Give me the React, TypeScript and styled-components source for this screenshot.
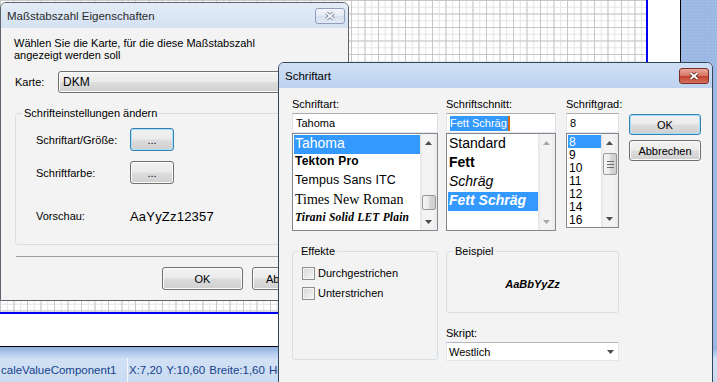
import React from "react";
import styled, { createGlobalStyle, css } from "styled-components";

const ui = `"Liberation Sans", Arial, sans-serif`;

const GlobalStyle = createGlobalStyle`
  * { box-sizing: border-box; }
  html, body { margin: 0; padding: 0; }
  body {
    width: 717px;
    height: 382px;
    overflow: hidden;
    font-family: ${ui};
    font-size: 11px;
    color: #000;
  }
`;

/* ---------- background application ---------- */

const Desktop = styled.div`
  position: relative;
  width: 717px;
  height: 382px;
  display: flex;
  flex-direction: column;
  overflow: hidden;
`;

const Workspace = styled.div`
  height: 347px;
  display: flex;
  flex: none;
`;

const CanvasView = styled.div`
  width: 681px;
  height: 347px;
  background: #fff;
  border-right: 1px solid #000;
  border-bottom: 1px solid #000;
`;

const Sheet = styled.div`
  width: 648px;
  height: 314px;
  border-right: 2px solid #0000f0;
  border-bottom: 2px solid #0000f0;
  background-color: #fff;
  background-image: linear-gradient(to right, #c6c6c6 1px, transparent 1px),
    linear-gradient(to bottom, #c6c6c6 1px, transparent 1px),
    linear-gradient(to right, #e4e4e4 1px, transparent 1px),
    linear-gradient(to bottom, #e4e4e4 1px, transparent 1px);
  background-size: 13.5px 13.5px, 13.5px 13.5px, 6.75px 6.75px, 6.75px 6.75px;
`;

const SidePanel = styled.div`
  flex: 1;
  background-color: #9bb8e3;
  background-image: radial-gradient(#a9c3ea 0.6px, transparent 0.8px);
  background-size: 3px 3px;
`;

const StatusBar = styled.footer`
  flex: 1;
  display: flex;
  flex-direction: column;
`;

const StatusShade = styled.div`
  height: 11px;
  background: linear-gradient(#8eafdd, #b5cced 60%, #c8daf2);
`;

const StatusRow = styled.div`
  flex: 1;
  display: flex;
  align-items: center;
  background: linear-gradient(#d2e1f5, #c9dbf2);
  color: #15428b;
  font-size: 11.5px;
  white-space: nowrap;
`;

const StatusCell = styled.div<{ $w?: number }>`
  display: flex;
  gap: 4px;
  height: 100%;
  align-items: center;
  padding: 0 4px 0 1px;
  ${(p) =>
    p.$w &&
    css`
      width: ${p.$w}px;
      border-right: 1px solid #f4f8fd;
    `}
`;

/* ---------- window chrome ---------- */

const Window = styled.section<{ $x: number; $y: number; $w: number; $h: number; $active?: boolean }>`
  position: absolute;
  left: ${(p) => p.$x}px;
  top: ${(p) => p.$y}px;
  width: ${(p) => p.$w}px;
  height: ${(p) => p.$h}px;
  display: flex;
  flex-direction: column;
  border: 1px solid ${(p) => (p.$active ? "#34455e" : "#5c636d")};
  border-radius: 6px 6px 0 0;
  background: #f3f3f3;
  overflow: hidden;
`;

const TitleBar = styled.header<{ $active?: boolean }>`
  height: 25px;
  flex: none;
  display: flex;
  align-items: center;
  justify-content: space-between;
  padding: 0 3px 0 6px;
  background: ${(p) =>
    p.$active ? "linear-gradient(#cfe0f5, #bed3ef)" : "linear-gradient(#e2ebf6, #d5e2f2)"};
`;

const TitleText = styled.h1<{ $active?: boolean }>`
  margin: 0;
  font-size: 11.5px;
  font-weight: normal;
  color: ${(p) => (p.$active ? "#000" : "#2b2b2b")};
`;

const CloseButton = styled.div<{ $active?: boolean }>`
  width: 30px;
  height: 16px;
  display: flex;
  align-items: center;
  justify-content: center;
  border: 1px solid ${(p) => (p.$active ? "#7b2e25" : "#8d9fbb")};
  border-radius: 3px;
  background: ${(p) =>
    p.$active
      ? "linear-gradient(#eba99c, #d87563 48%, #c4412e 52%, #d4725f)"
      : "linear-gradient(#f3f6fb, #e3eaf4 48%, #d6e0ee 52%, #e2e9f4)"};
`;

const CloseGlyph = ({ active }: { active?: boolean }) => (
  <svg width="12" height="10" viewBox="0 0 12 10">
    <path d="M2.5 2 L9.5 8 M9.5 2 L2.5 8" stroke={active ? "#5a2019" : "#6f7b8e"} strokeWidth="3.6" />
    <path d="M2.5 2 L9.5 8 M9.5 2 L2.5 8" stroke={active ? "#fff" : "#f4f6f9"} strokeWidth="1.8" />
  </svg>
);

const Client = styled.div<{ $pad: string }>`
  flex: 1;
  display: flex;
  flex-direction: column;
  padding: ${(p) => p.$pad};
`;

/* ---------- controls ---------- */

const PushButton = styled.button<{ $w: number; $h: number; $focused?: boolean }>`
  width: ${(p) => p.$w}px;
  height: ${(p) => p.$h}px;
  flex: none;
  padding: 0;
  font: 11px ${ui};
  color: #000;
  border: 1px solid ${(p) => (p.$focused ? "#3c7fb1" : "#707070")};
  border-radius: 3px;
  background: linear-gradient(#f2f2f2, #ebebeb 48%, #dddddd 52%, #cfcfcf);
  box-shadow: inset 0 0 0 1px ${(p) => (p.$focused ? "#9fe2fb" : "#fbfbfb")};
`;

const GroupBox = styled.fieldset<{ $h: number; $w?: number }>`
  margin: 0;
  padding: 0;
  min-width: 0;
  height: ${(p) => p.$h}px;
  ${(p) => p.$w && `width: ${p.$w}px; flex: none;`}
  border: 1px solid #d5dfe5;
  border-radius: 3px;
`;

const Legend = styled.legend`
  margin-left: 6px;
  padding: 0 2px;
  line-height: 13px;
  font-size: 11px;
`;

const Checkbox = styled.span`
  width: 13px;
  height: 13px;
  flex: none;
  border: 1px solid #8e8f8f;
  background: linear-gradient(135deg, #d6d6d6, #f6f6f6);
  box-shadow: inset 0 0 0 1px #f4f4f4;
`;

const CheckRow = styled.label`
  display: flex;
  align-items: center;
  gap: 3px;
  height: 16px;
`;

/* ---------- dialog 1 ---------- */

const Intro = styled.p`
  margin: 0;
  line-height: 12px;
`;

const MapRow = styled.div`
  display: flex;
  align-items: center;
  margin-top: 10px;
`;

const MapLabel = styled.span`
  width: 44px;
  padding-left: 1px;
`;

const DropButton = styled.div`
  flex: 1;
  height: 22px;
  display: flex;
  align-items: center;
  padding-left: 4px;
  font-size: 12px;
  border: 1px solid #707070;
  border-radius: 3px;
  background: linear-gradient(#f2f2f2, #ebebeb 48%, #dddddd 52%, #cfcfcf);
  box-shadow: inset 0 0 0 1px #fbfbfb;
`;

const SettingsGroup = styled(GroupBox)`
  margin: 14px 0 0 1px;
`;

const SettingsBody = styled.div`
  display: flex;
  flex-direction: column;
  gap: 10px;
  padding: 8px 0 0 20px;
`;

const SettingRow = styled.div<{ $gapTop?: number }>`
  display: flex;
  align-items: center;
  min-height: 16px;
  ${(p) => p.$gapTop && `margin-top: ${p.$gapTop}px;`}
`;

const SettingLabel = styled.span`
  width: 94px;
`;

const PreviewText = styled.span`
  font-size: 13px;
  letter-spacing: 0.2px;
`;

const Separator = styled.hr`
  margin: 11px 0 0 2px;
  border: 0;
  height: 1px;
  background: #a0a0a0;
`;

const ButtonBar = styled.div`
  display: flex;
  justify-content: flex-end;
  gap: 9px;
  margin: 10px 2px 0 0;
`;

/* ---------- dialog 2 ---------- */

const TopSection = styled.div`
  display: flex;
`;

const Column = styled.div<{ $w: number; $ml?: number }>`
  width: ${(p) => p.$w}px;
  margin-left: ${(p) => p.$ml ?? 0}px;
  flex: none;
  display: flex;
  flex-direction: column;
`;

const FieldLabel = styled.div`
  line-height: 13px;
  margin-bottom: 2px;
`;

const EditBox = styled.div`
  height: 20px;
  display: flex;
  align-items: center;
  padding-left: 3px;
  background: #fff;
  border: 1px solid #e3e9ef;
  border-top-color: #abadb3;
  border-left-color: #e2e3ea;
  border-right-color: #dbdfe6;
  white-space: nowrap;
`;

const Selection = styled.span`
  background: #3399ff;
  color: #fff;
  line-height: 15px;
  padding-right: 1px;
`;

const Caret = styled.span`
  width: 2px;
  height: 15px;
  background: #cc6a1a;
`;

const ListBox = styled.div<{ $h: number }>`
  height: ${(p) => p.$h}px;
  display: flex;
  background: #fff;
  border: 1px solid #828790;
`;

const ListItems = styled.div`
  flex: 1;
  min-width: 0;
  padding: 1px 0 0 1px;
  overflow: hidden;
`;

type Face = "plain" | "tekton" | "tempus" | "times" | "tirani" | "bold" | "italic" | "boldItalic" | "size";

const faces: Record<Face, ReturnType<typeof css>> = {
  plain: css`font: 14px ${ui};`,
  tekton: css`font: bold 12px ${ui}; letter-spacing: 0.2px;`,
  tempus: css`font: 12.5px ${ui}; letter-spacing: 0.1px;`,
  times: css`font: 14px "Liberation Serif", "Times New Roman", serif;`,
  tirani: css`font: italic bold 11.5px "Liberation Serif", serif; letter-spacing: 0.2px;`,
  bold: css`font: bold 14px ${ui};`,
  italic: css`font: italic 14px ${ui};`,
  boldItalic: css`font: italic bold 14px ${ui};`,
  size: css`font: 12px ${ui};`,
};

const ListItem = styled.div<{ $h: number; $face: Face; $selected?: boolean }>`
  height: ${(p) => p.$h}px;
  line-height: ${(p) => p.$h}px;
  padding-left: 1px;
  white-space: nowrap;
  ${(p) => faces[p.$face]}
  ${(p) =>
    p.$selected &&
    css`
      background: #3399ff;
      color: #fff;
    `}
`;

const ScrollBar = styled.div`
  width: 17px;
  flex: none;
  display: flex;
  flex-direction: column;
  background: linear-gradient(to right, #e4e4e4, #f3f3f3 3px, #f3f3f3 13px, #eaeaea);
`;

const ArrowButton = styled.div`
  height: 17px;
  flex: none;
  display: flex;
  align-items: center;
  justify-content: center;
`;

const Track = styled.div<{ $thumbTop: number }>`
  flex: 1;
  padding-top: ${(p) => p.$thumbTop}px;
`;

const Thumb = styled.div<{ $h: number }>`
  height: ${(p) => p.$h}px;
  margin: 0 1px 0 2px;
  display: flex;
  align-items: center;
  justify-content: center;
  border: 1px solid #979797;
  border-radius: 2px;
  background: linear-gradient(to right, #f6f6f6, #e9e9e9 50%, #d9d9d9 51%, #cdcdcd);
`;

const Arrow = ({ up, dim }: { up?: boolean; dim?: boolean }) => (
  <svg width="7" height="4" viewBox="0 0 7 4">
    <polygon points={up ? "3.5,0 7,4 0,4" : "0,0 7,0 3.5,4"} fill={dim ? "#a8a8a8" : "#4d4d4d"} />
  </svg>
);

const Grip = () => (
  <svg width="7" height="7" viewBox="0 0 7 7">
    <path d="M0 0.5 H7 M0 3.5 H7 M0 6.5 H7" stroke="#6e6e6e" strokeWidth="1" />
  </svg>
);

const VScroll = ({ thumbTop, thumbH, grip, dim }: { thumbTop?: number; thumbH?: number; grip?: boolean; dim?: boolean }) => (
  <ScrollBar>
    <ArrowButton>
      <Arrow up dim={dim} />
    </ArrowButton>
    <Track $thumbTop={thumbTop ?? 0}>{thumbH ? <Thumb $h={thumbH}>{grip && <Grip />}</Thumb> : null}</Track>
    <ArrowButton>
      <Arrow dim={dim} />
    </ArrowButton>
  </ScrollBar>
);

const ButtonColumn = styled.div`
  margin-left: 10px;
  padding-top: 16px;
  display: flex;
  flex-direction: column;
  gap: 5px;
`;

const LowerSection = styled.div`
  display: flex;
  margin-top: 14px;
`;

const CheckList = styled.div`
  display: flex;
  flex-direction: column;
  gap: 4px;
  padding: 7px 0 0 9px;
`;

const SampleColumn = styled.div`
  width: 173px;
  margin-left: 8px;
  display: flex;
  flex-direction: column;
`;

const SampleArea = styled.div`
  height: 52px;
  display: flex;
  align-items: center;
  justify-content: center;
  font: italic bold 11px ${ui};
`;

const ScriptLabel = styled(FieldLabel)`
  margin-top: 14px;
`;

const ScriptCombo = styled.div`
  height: 19px;
  display: flex;
  align-items: center;
  justify-content: space-between;
  padding: 0 4px 0 2px;
  background: #fff;
  border: 1px solid #e3e6ea;
  border-top-color: #b4b7bd;
`;

const fontNames: { name: string; face: Face }[] = [
  { name: "Tahoma", face: "plain" },
  { name: "Tekton Pro", face: "tekton" },
  { name: "Tempus Sans ITC", face: "tempus" },
  { name: "Times New Roman", face: "times" },
  { name: "Tirani Solid LET Plain", face: "tirani" },
];

const styles: { name: string; face: Face }[] = [
  { name: "Standard", face: "plain" },
  { name: "Fett", face: "bold" },
  { name: "Schräg", face: "italic" },
  { name: "Fett Schräg", face: "boldItalic" },
];

const sizes = ["8", "9", "10", "11", "12", "14", "16"];

export default function App() {
  return (
    <Desktop>
      <GlobalStyle />
      <Workspace>
        <CanvasView>
          <Sheet />
        </CanvasView>
        <SidePanel />
      </Workspace>
      <StatusBar>
        <StatusShade />
        <StatusRow>
          <StatusCell $w={128}>caleValueComponent1</StatusCell>
          <StatusCell>
            <span>X:7,20</span>
            <span>Y:10,60</span>
            <span>Breite:1,60</span>
            <span>Höhe:0,50</span>
          </StatusCell>
        </StatusRow>
      </StatusBar>

      <Window $x={0} $y={2} $w={349} $h={299}>
        <TitleBar>
          <TitleText>Maßstabszahl Eigenschaften</TitleText>
          <CloseButton>
            <CloseGlyph />
          </CloseButton>
        </TitleBar>
        <Client $pad="9px 13px 0 13px">
          <Intro>
            Wählen Sie die Karte, für die diese Maßstabszahl
            <br />
            angezeigt werden soll
          </Intro>
          <MapRow>
            <MapLabel>Karte:</MapLabel>
            <DropButton>DKM</DropButton>
          </MapRow>
          <SettingsGroup $h={138}>
            <Legend>Schrifteinstellungen ändern</Legend>
            <SettingsBody>
              <SettingRow>
                <SettingLabel>Schriftart/Größe:</SettingLabel>
                <PushButton $w={44} $h={23} $focused>
                  ...
                </PushButton>
              </SettingRow>
              <SettingRow>
                <SettingLabel>Schriftfarbe:</SettingLabel>
                <PushButton $w={44} $h={23}>
                  ...
                </PushButton>
              </SettingRow>
              <SettingRow $gapTop={14}>
                <SettingLabel>Vorschau:</SettingLabel>
                <PreviewText>AaYyZz12357</PreviewText>
              </SettingRow>
            </SettingsBody>
          </SettingsGroup>
          <Separator />
          <ButtonBar>
            <PushButton $w={81} $h={23}>
              OK
            </PushButton>
            <PushButton $w={81} $h={23}>
              Abbrechen
            </PushButton>
          </ButtonBar>
        </Client>
      </Window>

      <Window $x={278} $y={62} $w={435} $h={330} $active>
        <TitleBar $active>
          <TitleText $active>Schriftart</TitleText>
          <CloseButton $active>
            <CloseGlyph active />
          </CloseButton>
        </TitleBar>
        <Client $pad="10px 0 0 13px">
          <TopSection>
            <Column $w={146}>
              <FieldLabel>Schriftart:</FieldLabel>
              <EditBox>Tahoma</EditBox>
              <ListBox $h={98}>
                <ListItems>
                  {fontNames.map((f, i) => (
                    <ListItem key={f.name} $h={19} $face={f.face} $selected={i === 0}>
                      {f.name}
                    </ListItem>
                  ))}
                </ListItems>
                <VScroll thumbTop={44} thumbH={15} />
              </ListBox>
            </Column>
            <Column $w={110} $ml={8}>
              <FieldLabel>Schriftschnitt:</FieldLabel>
              <EditBox>
                <Selection>Fett Schräg</Selection>
                <Caret />
              </EditBox>
              <ListBox $h={98}>
                <ListItems>
                  {styles.map((s, i) => (
                    <ListItem key={s.name} $h={19} $face={s.face} $selected={i === 3}>
                      {s.name}
                    </ListItem>
                  ))}
                </ListItems>
                <VScroll dim />
              </ListBox>
            </Column>
            <Column $w={53} $ml={10}>
              <FieldLabel>Schriftgrad:</FieldLabel>
              <EditBox>8</EditBox>
              <ListBox $h={95}>
                <ListItems>
                  {sizes.map((s, i) => (
                    <ListItem key={s} $h={13} $face="size" $selected={i === 0}>
                      {s}
                    </ListItem>
                  ))}
                </ListItems>
                <VScroll thumbTop={2} thumbH={22} grip />
              </ListBox>
            </Column>
            <ButtonColumn>
              <PushButton $w={72} $h={21} $focused>
                OK
              </PushButton>
              <PushButton $w={72} $h={21}>
                Abbrechen
              </PushButton>
            </ButtonColumn>
          </TopSection>

          <LowerSection>
            <GroupBox $h={115} $w={146}>
              <Legend>Effekte</Legend>
              <CheckList>
                <CheckRow>
                  <Checkbox />
                  Durchgestrichen
                </CheckRow>
                <CheckRow>
                  <Checkbox />
                  Unterstrichen
                </CheckRow>
              </CheckList>
            </GroupBox>
            <SampleColumn>
              <GroupBox $h={68}>
                <Legend>Beispiel</Legend>
                <SampleArea>AaBbYyZz</SampleArea>
              </GroupBox>
              <ScriptLabel>Skript:</ScriptLabel>
              <ScriptCombo>
                Westlich
                <Arrow />
              </ScriptCombo>
            </SampleColumn>
          </LowerSection>
        </Client>
      </Window>
    </Desktop>
  );
}
